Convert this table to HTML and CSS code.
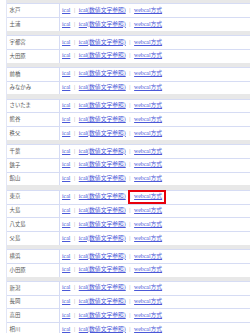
FILE: index.html
```html
<!DOCTYPE html>
<html lang="ja">
<head>
<meta charset="utf-8">
<title>地点一覧</title>
<link rel="stylesheet" href="styles.css">
</head>
<body>
<div class="list">
  <div class="sep"></div>
  <div class="row"><div class="name">水戸</div><div class="links"><a href="#">ical</a><span class="bar">|</span><a href="#">ical(数値文字参照)</a><span class="bar">|</span><a href="#">webcal方式</a></div></div>
  <div class="row"><div class="name">土浦</div><div class="links"><a href="#">ical</a><span class="bar">|</span><a href="#">ical(数値文字参照)</a><span class="bar">|</span><a href="#">webcal方式</a></div></div>
  <div class="sep"></div>
  <div class="row"><div class="name">宇都宮</div><div class="links"><a href="#">ical</a><span class="bar">|</span><a href="#">ical(数値文字参照)</a><span class="bar">|</span><a href="#">webcal方式</a></div></div>
  <div class="row"><div class="name">大田原</div><div class="links"><a href="#">ical</a><span class="bar">|</span><a href="#">ical(数値文字参照)</a><span class="bar">|</span><a href="#">webcal方式</a></div></div>
  <div class="sep"></div>
  <div class="row"><div class="name">前橋</div><div class="links"><a href="#">ical</a><span class="bar">|</span><a href="#">ical(数値文字参照)</a><span class="bar">|</span><a href="#">webcal方式</a></div></div>
  <div class="row"><div class="name">みなかみ</div><div class="links"><a href="#">ical</a><span class="bar">|</span><a href="#">ical(数値文字参照)</a><span class="bar">|</span><a href="#">webcal方式</a></div></div>
  <div class="sep"></div>
  <div class="row"><div class="name">さいたま</div><div class="links"><a href="#">ical</a><span class="bar">|</span><a href="#">ical(数値文字参照)</a><span class="bar">|</span><a href="#">webcal方式</a></div></div>
  <div class="row"><div class="name">熊谷</div><div class="links"><a href="#">ical</a><span class="bar">|</span><a href="#">ical(数値文字参照)</a><span class="bar">|</span><a href="#">webcal方式</a></div></div>
  <div class="row"><div class="name">秩父</div><div class="links"><a href="#">ical</a><span class="bar">|</span><a href="#">ical(数値文字参照)</a><span class="bar">|</span><a href="#">webcal方式</a></div></div>
  <div class="sep"></div>
  <div class="row"><div class="name">千葉</div><div class="links"><a href="#">ical</a><span class="bar">|</span><a href="#">ical(数値文字参照)</a><span class="bar">|</span><a href="#">webcal方式</a></div></div>
  <div class="row"><div class="name">銚子</div><div class="links"><a href="#">ical</a><span class="bar">|</span><a href="#">ical(数値文字参照)</a><span class="bar">|</span><a href="#">webcal方式</a></div></div>
  <div class="row"><div class="name">館山</div><div class="links"><a href="#">ical</a><span class="bar">|</span><a href="#">ical(数値文字参照)</a><span class="bar">|</span><a href="#">webcal方式</a></div></div>
  <div class="sep"></div>
  <div class="row"><div class="name">東京</div><div class="links"><a href="#">ical</a><span class="bar">|</span><a href="#">ical(数値文字参照)</a><span class="bar">|</span><a href="#" class="hl">webcal方式</a></div></div>
  <div class="row"><div class="name">大島</div><div class="links"><a href="#">ical</a><span class="bar">|</span><a href="#">ical(数値文字参照)</a><span class="bar">|</span><a href="#">webcal方式</a></div></div>
  <div class="row"><div class="name">八丈島</div><div class="links"><a href="#">ical</a><span class="bar">|</span><a href="#">ical(数値文字参照)</a><span class="bar">|</span><a href="#">webcal方式</a></div></div>
  <div class="row"><div class="name">父島</div><div class="links"><a href="#">ical</a><span class="bar">|</span><a href="#">ical(数値文字参照)</a><span class="bar">|</span><a href="#">webcal方式</a></div></div>
  <div class="sep"></div>
  <div class="row"><div class="name">横浜</div><div class="links"><a href="#">ical</a><span class="bar">|</span><a href="#">ical(数値文字参照)</a><span class="bar">|</span><a href="#">webcal方式</a></div></div>
  <div class="row"><div class="name">小田原</div><div class="links"><a href="#">ical</a><span class="bar">|</span><a href="#">ical(数値文字参照)</a><span class="bar">|</span><a href="#">webcal方式</a></div></div>
  <div class="sep"></div>
  <div class="row"><div class="name">新潟</div><div class="links"><a href="#">ical</a><span class="bar">|</span><a href="#">ical(数値文字参照)</a><span class="bar">|</span><a href="#">webcal方式</a></div></div>
  <div class="row"><div class="name">長岡</div><div class="links"><a href="#">ical</a><span class="bar">|</span><a href="#">ical(数値文字参照)</a><span class="bar">|</span><a href="#">webcal方式</a></div></div>
  <div class="row"><div class="name">高田</div><div class="links"><a href="#">ical</a><span class="bar">|</span><a href="#">ical(数値文字参照)</a><span class="bar">|</span><a href="#">webcal方式</a></div></div>
  <div class="row"><div class="name">相川</div><div class="links"><a href="#">ical</a><span class="bar">|</span><a href="#">ical(数値文字参照)</a><span class="bar">|</span><a href="#">webcal方式</a></div></div>
</div>
</body>
</html>
```

FILE: styles.css
```css
html, body {
  margin: 0;
  padding: 0;
  background: #ffffff;
  overflow: hidden;
}

body {
  font-family: "Liberation Serif", "Noto Sans CJK JP", serif;
  line-height: 1;
}

.list {
  margin: -1px 0 0 6px;
  border-left: 1px solid #e2e6f6;
}

.sep {
  height: 4.3px;
  background: #e8e8e8;
}

.row {
  display: grid;
  grid-template-columns: 53px 1fr;
  height: 13.76px;
  box-sizing: border-box;
  border-top: 1px solid #d6dcf4;
}

.name {
  display: flex;
  align-items: center;
  padding-left: 2.5px;
  border-right: 1px solid #d6dcf4;
  font-size: 5.4px;
  color: #555555;
  white-space: nowrap;
}

.links {
  display: flex;
  align-items: center;
  padding-left: 2px;
  font-size: 5.8px;
  white-space: nowrap;
}

.links a {
  color: #4a58d8;
  text-decoration: underline;
}

.bar {
  margin: 0 3.6px;
  color: #a0a0a0;
}

.hl {
  position: relative;
}

.hl::after {
  content: "";
  position: absolute;
  left: -6px;
  right: -4px;
  top: calc(50% - 6.8px);
  height: 13.6px;
  box-sizing: border-box;
  border: 2px solid #e8000b;
}
```
